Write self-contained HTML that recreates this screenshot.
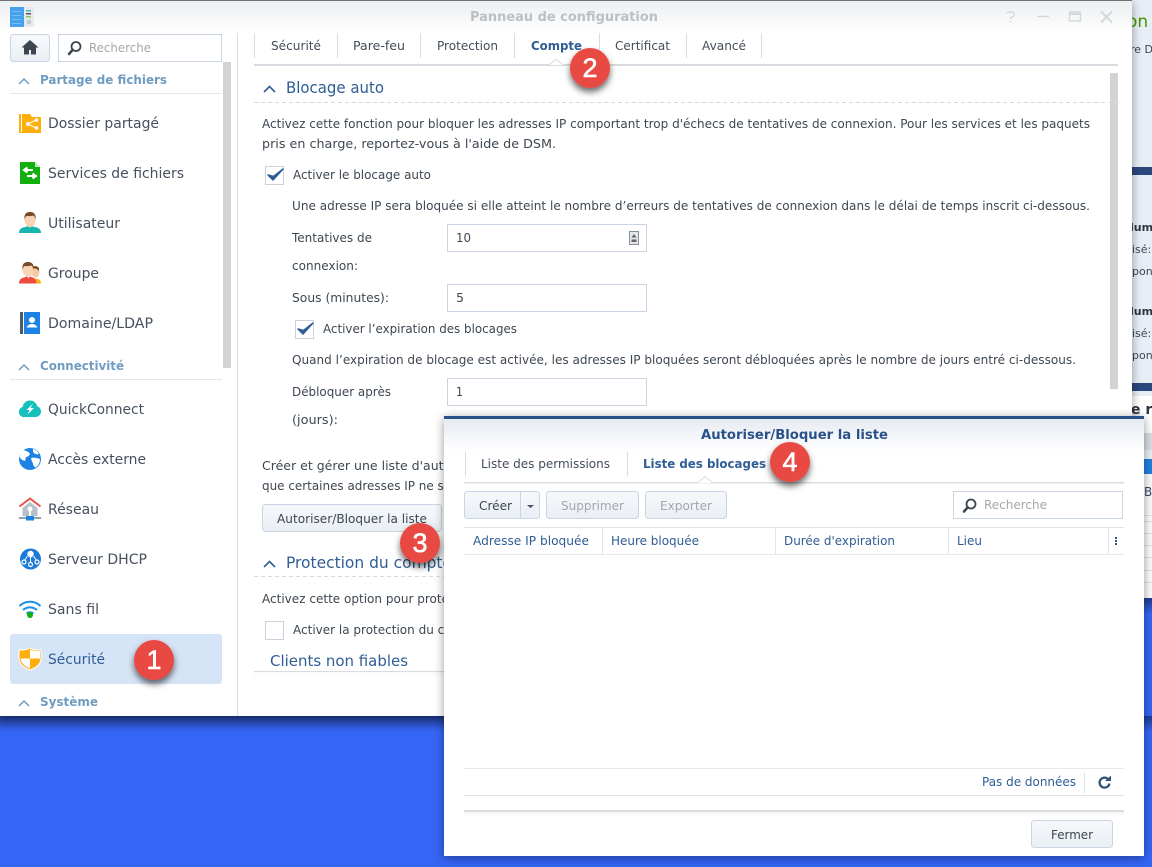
<!DOCTYPE html>
<html lang="fr"><head><meta charset="utf-8"><title>Panneau de configuration</title>
<style>
html,body{margin:0;padding:0;width:1152px;height:867px;overflow:hidden;background:#3565f5}
svg{display:block;position:absolute;left:0;top:0;filter:blur(.3px)}
text{font-family:"DejaVu Sans","Liberation Sans",sans-serif;white-space:pre}
.s{font-size:14px;fill:#46505e}
.h{font-size:12.5px;font-weight:bold;fill:#6f9cc2}
.t{font-size:12px;fill:#434d59}
.b{font-size:12px;fill:#3d4751}
.e{font-size:11px;fill:#3d4751}
.bl{font-size:16px;fill:#2f5d95}
.n{font-size:12px;fill:#2f5d95}
.g{font-size:12px;fill:#a2a8ae}
.r{font-family:"Liberation Sans",sans-serif;font-size:27px;fill:#fff;stroke:#fff;stroke-width:.6px;text-anchor:middle}
</style></head><body>
<svg width="1152" height="867" viewBox="0 0 1152 867" xmlns="http://www.w3.org/2000/svg">
<defs>
<linearGradient id="tb" x1="0" y1="0" x2="0" y2="1"><stop offset="0" stop-color="#eceef0"/><stop offset="1" stop-color="#fff"/></linearGradient>
<linearGradient id="db" x1="0" y1="0" x2="0" y2="1"><stop offset="0" stop-color="#e6ebf2"/><stop offset="1" stop-color="#fff"/></linearGradient>
<linearGradient id="btn" x1="0" y1="0" x2="0" y2="1"><stop offset="0" stop-color="#f6f8fb"/><stop offset="1" stop-color="#eaeff5"/></linearGradient>
<linearGradient id="bg" x1="0" y1="0" x2="0" y2="1"><stop offset="0" stop-color="#1e3a8e"/><stop offset="1" stop-color="#3565f5"/></linearGradient>
<filter id="ws" x="-5%" y="-5%" width="110%" height="110%"><feDropShadow dx="0" dy="2" stdDeviation="5" flood-color="#000" flood-opacity=".4"/></filter>
<filter id="bs" x="-50%" y="-50%" width="200%" height="200%"><feDropShadow dx="0" dy="4" stdDeviation="3.500" flood-color="#000" flood-opacity=".6"/></filter>
<clipPath id="cr"><rect x="1132" y="0" width="20" height="600"/></clipPath>
</defs>

<!-- desktop + window behind -->
<rect width="1152" height="867" fill="#3565f5"/>
<rect x="0" y="716" width="1152" height="16" fill="url(#bg)"/>
<rect x="1120" y="0" width="32" height="598" fill="#e9eef6"/>
<rect x="1120" y="598" width="32" height="16" fill="url(#bg)"/>
<rect x="1120" y="167" width="32" height="8" fill="#2a477d"/>
<rect x="1120" y="383" width="32" height="8" fill="#2a477d"/>
<rect x="1132" y="396" width="20" height="37" fill="#fff"/>
<rect x="1132" y="433" width="20" height="17" fill="#d8dde3"/>
<rect x="1132" y="459" width="20" height="15" fill="#1f80e0"/>
<rect x="1132" y="474" width="20" height="124" fill="#fbfcfd"/>
<g fill="#dfe3e8"><rect x="1132" y="515" width="20" height="1"/><rect x="1132" y="521" width="20" height="1"/><rect x="1132" y="533" width="20" height="1"/><rect x="1132" y="545" width="20" height="1"/><rect x="1132" y="557" width="20" height="1"/><rect x="1132" y="570" width="20" height="1"/><rect x="1132" y="582" width="20" height="1"/></g>
<g clip-path="url(#cr)">
<text x="1127" y="27" style="font-size:17px;fill:#3a9a00">on</text>
<text x="1130" y="53" class="e">re D</text>
<text x="1130" y="231" class="e" font-weight="bold" style="fill:#2d3540">lum</text>
<text x="1132" y="253" class="e">isé:</text>
<text x="1132" y="275" class="e">pon</text>
<text x="1130" y="315" class="e" font-weight="bold" style="fill:#2d3540">lum</text>
<text x="1132" y="337" class="e">isé:</text>
<text x="1132" y="359" class="e">pon</text>
<text x="1131" y="414" font-weight="bold" style="font-size:14px;fill:#2d3540">e re</text>
<text x="1144" y="496" class="b" style="fill:#3d4a66">B,</text>
</g>

<!-- main window -->
<rect x="0" y="0" width="1132" height="716" fill="#fff" filter="url(#ws)"/>
<rect x="0" y="0" width="1132" height="33" fill="url(#tb)"/>
<rect x="0" y="0" width="1132" height="1" fill="#6c7178"/>
<!-- app icon -->
<rect x="10" y="7" width="14" height="20" fill="#45a0ee"/>
<rect x="24" y="7" width="10" height="20" fill="#e6eaee"/>
<g fill="#79bdf4"><rect x="12" y="11" width="9" height="1"/><rect x="12" y="15" width="9" height="1"/><rect x="12" y="19" width="9" height="1"/><rect x="12" y="23" width="9" height="1"/></g>
<rect x="26" y="10" width="5" height="1.500" fill="#4fb3c8"/><rect x="26" y="13" width="5" height="1.500" fill="#555"/><rect x="26" y="16" width="5" height="1.500" fill="#8cc850"/><circle cx="29" cy="22" r="2.500" fill="#c3ccd4"/>
<text x="470" y="21" textLength="188" lengthAdjust="spacingAndGlyphs" font-weight="bold" style="font-size:13px;fill:#bcc0c5">Panneau de configuration</text>
<!-- win controls -->
<g stroke="#d5d8db" stroke-width="1.500" fill="none">
<path d="M1007 13.500q1-1.500 3.500-1.500q3.500 0 3.500 2.500q0 1.500-2 2.500q-1.500.7-1.500 2.500M1010.500 21v1.500"/>
<path d="M1037 16.500h12"/>
<rect x="1069.500" y="12" width="11" height="9" stroke-width="1.500"/><path d="M1070 14h10" stroke-width="2"/>
<path d="M1101 11.500l11 11M1112 11.500l-11 11" stroke-width="2"/>
</g>

<!-- sidebar -->
<rect x="10.500" y="34.500" width="39" height="27" rx="3" fill="url(#btn)" stroke="#c9d5e3"/>
<path d="M30 40l-8.500 7.500h2.500v7h5v-4.500h2v4.500h5v-7h2.500z" fill="#3d4650"/>
<rect x="58.500" y="34.500" width="163" height="27" fill="#fff" stroke="#c9d5e3"/>
<circle cx="76" cy="46.500" r="4.500" fill="none" stroke="#3d4650" stroke-width="1.800"/><path d="M72.500 50l-3.500 4" stroke="#3d4650" stroke-width="2.500" stroke-linecap="round"/>
<text x="89" y="52" textLength="62" lengthAdjust="spacingAndGlyphs" class="g">Recherche</text>
<rect x="223" y="62" width="8" height="306" fill="#d2d3d5"/>
<rect x="237" y="33" width="1" height="683" fill="#dcdfe2"/>

<path d="M19 84l5-5 5 5" fill="none" stroke="#6f9cc2" stroke-width="1.500"/>
<text x="40" y="84" textLength="127" lengthAdjust="spacingAndGlyphs" class="h">Partage de fichiers</text>
<rect x="10" y="93" width="212" height="1" fill="#e6e9ec"/>
<path d="M19 370l5-5 5 5" fill="none" stroke="#6f9cc2" stroke-width="1.500"/>
<text x="40" y="370" textLength="84" lengthAdjust="spacingAndGlyphs" class="h">Connectivité</text>
<rect x="10" y="379" width="212" height="1" fill="#e6e9ec"/>
<path d="M19 706l5-5 5 5" fill="none" stroke="#6f9cc2" stroke-width="1.500"/>
<text x="40" y="706" textLength="58" lengthAdjust="spacingAndGlyphs" class="h">Système</text>
<rect x="10" y="634" width="212" height="50" rx="3" fill="#d6e4f7"/>

<text x="48" y="128" textLength="111" lengthAdjust="spacingAndGlyphs" class="s">Dossier partagé</text>
<text x="48" y="178" textLength="136" lengthAdjust="spacingAndGlyphs" class="s">Services de fichiers</text>
<text x="48" y="228" textLength="72" lengthAdjust="spacingAndGlyphs" class="s">Utilisateur</text>
<text x="48" y="278" textLength="51" lengthAdjust="spacingAndGlyphs" class="s">Groupe</text>
<text x="48" y="328" textLength="105" lengthAdjust="spacingAndGlyphs" class="s">Domaine/LDAP</text>
<text x="48" y="414" textLength="96" lengthAdjust="spacingAndGlyphs" class="s">QuickConnect</text>
<text x="48" y="464" textLength="98" lengthAdjust="spacingAndGlyphs" class="s">Accès externe</text>
<text x="48" y="514" textLength="51" lengthAdjust="spacingAndGlyphs" class="s">Réseau</text>
<text x="48" y="564" textLength="99" lengthAdjust="spacingAndGlyphs" class="s">Serveur DHCP</text>
<text x="48" y="614" textLength="51" lengthAdjust="spacingAndGlyphs" class="s">Sans fil</text>
<text x="48" y="664" textLength="57" lengthAdjust="spacingAndGlyphs" class="s" style="fill:#2f5d95">Sécurité</text>

<!-- icon: dossier -->
<path d="M19 114h4l1 0h6l2 3h9v16H19z" fill="#fdae0a"/><rect x="21" y="114" width="1" height="18" fill="#fff"/>
<g fill="#fff" stroke="#fff"><path d="M28 124l8-4M28 124l8 4" stroke-width="1" fill="none"/><circle cx="28" cy="124" r="1.500"/><circle cx="36.500" cy="120" r="1.300"/><circle cx="36.500" cy="128" r="1.300"/></g>
<!-- icon: services -->
<path d="M20 162h15l5 5v17H20z" fill="#11b00f"/><path d="M35 162l5 5h-5z" fill="#bfe8bf"/>
<path d="M33 170h-8M27.500 167.500l-3.500 2.500 3.500 2.500M27 176h8M32.500 173.500l3.500 2.500-3.500 2.500" stroke="#fff" stroke-width="2" fill="none"/>
<!-- icon: utilisateur -->
<path d="M19 233q0-5 6-6l4-1 1 2 1-2 4 1q6 1 6 6z" fill="#19b5b0"/>
<ellipse cx="30" cy="220" rx="5.500" ry="7" fill="#f8d4b4"/><path d="M24.500 220q-1-8 5.500-8t5.500 8q-1-4-2-4.500-3 1-7 .5-1.500 1-2 4z" fill="#7a4a25"/>
<!-- icon: groupe -->
<path d="M32 283.500q0-4 3-5l3 .5q3 1 3 4.500z" fill="#fbae17"/><ellipse cx="35.500" cy="272" rx="4" ry="5.500" fill="#f5c9a4"/><path d="M32 268q3-4 7 0v3l-2-2z" fill="#7a4a25"/>
<path d="M19 283.500q0-5 5-6l3-1 1.500 1.500 1.500-1.500 3 1q3 1 3.500 6z" fill="#ee4a44"/>
<ellipse cx="28" cy="269.500" rx="5.500" ry="7" fill="#f8d4b4"/><path d="M22.500 270q-1-8 5.500-8t5.500 8q-1-4-2-4.500-3 1-7 .5-1.500 1-2 4z" fill="#7a4a25"/>
<!-- icon: domaine -->
<rect x="20" y="312" width="3" height="22" fill="#4d5a68"/><rect x="24" y="312" width="16" height="22" fill="#1c82e4"/>
<circle cx="32" cy="320" r="3" fill="#fff"/><path d="M26.500 327.500q1-3 5.500-3.500 4.500.5 5.500 3.500z" fill="#fff"/>
<!-- icon: quickconnect -->
<g fill="#17c0bc"><circle cx="30" cy="408" r="7.500"/><circle cx="24" cy="412" r="5.200"/><circle cx="35.500" cy="411.500" r="5.500"/><rect x="24" y="411" width="12" height="6"/></g><path d="M33 403.500l-6.500 6.500h3l-2 4.500 6.500-6.500h-3.500z" fill="#fff"/>
<!-- icon: accès -->
<circle cx="30" cy="459" r="11" fill="#1c82e4"/><path d="M23 450q5 1 7 3.500-1 3.500-4 3.500l-1 4q-4-1-5.500-4 .5-4.500 3.500-7zM31 458q5-1 9 1 0 5-4 8.500-2.500-.5-3-4-1.500-2.500-2-5.500zM33 449q4 1 6 5-3.500 1-6-2z" fill="#fff"/>
<!-- icon: réseau -->
<path d="M19.500 506.500L30 498.500l10.500 8" fill="none" stroke="#f0504a" stroke-width="2"/>
<path d="M22.500 508l7.500-6 7.500 6v8h-15z" fill="#b7bfc7"/><circle cx="30" cy="509" r="2.500" fill="#fff"/><rect x="29" y="510" width="2" height="6" fill="#fff"/>
<rect x="19" y="517" width="22" height="2" fill="#8fa0ae"/><rect x="26" y="516" width="8" height="4.500" fill="#1c82e4"/>
<!-- icon: dhcp -->
<circle cx="30.500" cy="559" r="10.500" fill="#1c7ad8"/><circle cx="30.500" cy="554" r="3.200" fill="#fff"/>
<path d="M30.500 556v6M27.500 556l-3 4.500M33.500 556l3 4.500" stroke="#fff" stroke-width="1" fill="none"/>
<g fill="#1c7ad8" stroke="#fff" stroke-width="1.200"><circle cx="24" cy="562" r="2"/><circle cx="30.500" cy="564.500" r="2"/><circle cx="37" cy="562" r="2"/></g>
<!-- icon: wifi -->
<g fill="none" stroke="#1c90e8" stroke-width="2"><path d="M19.500 606A15 15 0 0 1 40.500 606"/><path d="M23 610A10.500 10.500 0 0 1 37 610"/><path d="M26.500 613.500A5.500 5.500 0 0 1 33.500 613.500"/></g><circle cx="30" cy="615" r="3" fill="#11b00f"/>
<!-- icon: sécurité -->
<path d="M30 648q5 2.500 11 2v8q0 8-11 12-11-4-11-12v-8q6 .5 11-2z" fill="#fdae0a" stroke="#fff" stroke-width="1"/><path d="M30 649.500v9h10v-7.500q-5 .5-10-1.500zM30 658.500h-9.500q.5 6 9.500 10z" fill="#fff"/>

<!-- main tabs -->
<g fill="#d5dde6"><rect x="254" y="33" width="1" height="25"/><rect x="337" y="33" width="1" height="25"/><rect x="420" y="33" width="1" height="25"/><rect x="514" y="33" width="1" height="25"/><rect x="599" y="33" width="1" height="25"/><rect x="686" y="33" width="1" height="25"/><rect x="761" y="33" width="1" height="25"/></g>
<text x="271" y="50" textLength="50" lengthAdjust="spacingAndGlyphs" class="t">Sécurité</text>
<text x="353" y="50" textLength="52" lengthAdjust="spacingAndGlyphs" class="t">Pare-feu</text>
<text x="437" y="50" textLength="61" lengthAdjust="spacingAndGlyphs" class="t">Protection</text>
<text x="531" y="50" textLength="51" lengthAdjust="spacingAndGlyphs" class="t" font-weight="bold" style="fill:#2f5d95">Compte</text>
<text x="615" y="50" textLength="55" lengthAdjust="spacingAndGlyphs" class="t">Certificat</text>
<text x="702" y="50" textLength="44" lengthAdjust="spacingAndGlyphs" class="t">Avancé</text>
<rect x="254" y="64" width="864" height="2" fill="#d8dce0"/>
<path d="M549 65l7-6 7 6z" fill="#fff"/><path d="M549 65l7-6 7 6" fill="none" stroke="#d8dce0"/>

<rect x="1110" y="73" width="8" height="316" fill="#d2d3d5"/>
<path d="M264 92l5.500-5.500 5.500 5.500" fill="none" stroke="#2f5d95" stroke-width="1.600"/>
<text x="286" y="93" textLength="98" lengthAdjust="spacingAndGlyphs" class="bl">Blocage auto</text>
<path d="M254 102.500h865" stroke="#d5dbe2" stroke-dasharray="4 3" fill="none"/>

<text x="262" y="128" textLength="828" lengthAdjust="spacingAndGlyphs" class="b">Activez cette fonction pour bloquer les adresses IP comportant trop d'échecs de tentatives de connexion. Pour les services et les paquets</text>
<text x="262" y="148" textLength="294" lengthAdjust="spacingAndGlyphs" class="b">pris en charge, reportez-vous à l'aide de DSM.</text>
<rect x="265.500" y="166.500" width="18" height="18" fill="#fff" stroke="#c9d3de"/>
<path d="M268 175l5 5 10-11-9.500 7.500z" fill="#2f5d95" stroke="#2f5d95" stroke-width="1.500" stroke-linejoin="round"/>
<text x="293" y="179" textLength="138" lengthAdjust="spacingAndGlyphs" class="b">Activer le blocage auto</text>
<text x="292" y="210" textLength="798" lengthAdjust="spacingAndGlyphs" class="b">Une adresse IP sera bloquée si elle atteint le nombre d’erreurs de tentatives de connexion dans le délai de temps inscrit ci-dessous.</text>
<text x="292" y="242" textLength="80" lengthAdjust="spacingAndGlyphs" class="b">Tentatives de</text>
<text x="292" y="270" textLength="66" lengthAdjust="spacingAndGlyphs" class="b">connexion:</text>
<rect x="447.500" y="224.500" width="199" height="27" fill="#fff" stroke="#c9d5e3"/>
<text x="456" y="242" textLength="15" lengthAdjust="spacingAndGlyphs" class="b">10</text>
<rect x="629.500" y="231.500" width="9" height="13" fill="#e4e6e8" stroke="#8a8f95"/><path d="M631.500 237.500l2.500-3.500 2.500 3.500zM631.500 239.500h5v2.500h-5z" fill="#5f656c"/>
<text x="292" y="302" textLength="97" lengthAdjust="spacingAndGlyphs" class="b">Sous (minutes):</text>
<rect x="447.500" y="284.500" width="199" height="27" fill="#fff" stroke="#c9d5e3"/>
<text x="456" y="302" textLength="8" lengthAdjust="spacingAndGlyphs" class="b">5</text>
<rect x="295.500" y="320.500" width="18" height="18" fill="#fff" stroke="#c9d3de"/>
<path d="M298 329l5 5 10-11-9.500 7.500z" fill="#2f5d95" stroke="#2f5d95" stroke-width="1.500" stroke-linejoin="round"/>
<text x="323" y="333" textLength="194" lengthAdjust="spacingAndGlyphs" class="b">Activer l’expiration des blocages</text>
<text x="292" y="364" textLength="784" lengthAdjust="spacingAndGlyphs" class="b">Quand l’expiration de blocage est activée, les adresses IP bloquées seront débloquées après le nombre de jours entré ci-dessous.</text>
<text x="292" y="396" textLength="99" lengthAdjust="spacingAndGlyphs" class="b">Débloquer après</text>
<rect x="447.500" y="378.500" width="199" height="27" fill="#fff" stroke="#c9d5e3"/>
<text x="456" y="396" textLength="7" lengthAdjust="spacingAndGlyphs" class="b">1</text>
<text x="292" y="424" textLength="46" lengthAdjust="spacingAndGlyphs" class="b">(jours):</text>
<text x="262" y="470" textLength="236" lengthAdjust="spacingAndGlyphs" class="b">Créer et gérer une liste d'autorisation</text>
<text x="262" y="490" textLength="212" lengthAdjust="spacingAndGlyphs" class="b">que certaines adresses IP ne soient</text>
<rect x="262.500" y="504.500" width="179" height="27" rx="3" fill="url(#btn)" stroke="#c9d5e3"/>
<text x="277" y="523" textLength="150" lengthAdjust="spacingAndGlyphs" class="b">Autoriser/Bloquer la liste</text>
<path d="M264 567l5.500-5.500 5.500 5.500" fill="none" stroke="#2f5d95" stroke-width="1.600"/>
<text x="286" y="568" textLength="166" lengthAdjust="spacingAndGlyphs" class="bl">Protection du compte</text>
<path d="M254 576.500h200" stroke="#d5dbe2" stroke-dasharray="4 3" fill="none"/>
<text x="262" y="603" textLength="207" lengthAdjust="spacingAndGlyphs" class="b">Activez cette option pour protéger</text>
<rect x="265.500" y="621.500" width="18" height="18" fill="#fff" stroke="#c9d3de"/>
<text x="293" y="634" textLength="190" lengthAdjust="spacingAndGlyphs" class="b">Activer la protection du compte</text>
<text x="270" y="666" textLength="138" lengthAdjust="spacingAndGlyphs" style="font-size:15px;fill:#2f5d95">Clients non fiables</text>
<rect x="254" y="671" width="200" height="1" fill="#d8dce0"/>
<rect x="254" y="672" width="200" height="4" fill="#fafbfb"/>

<!-- dialog -->
<rect x="444" y="416" width="700" height="440" fill="#fff" filter="url(#ws)"/>
<rect x="444" y="419" width="700" height="32" fill="url(#db)"/>
<rect x="444" y="416" width="700" height="3" fill="#2a5288"/>
<text x="701" y="439" textLength="187" lengthAdjust="spacingAndGlyphs" font-weight="bold" style="font-size:13px;fill:#2a5288">Autoriser/Bloquer la liste</text>
<g fill="#d5dde6"><rect x="465" y="452" width="1" height="24"/><rect x="627" y="452" width="1" height="24"/></g>
<text x="481" y="468" textLength="129" lengthAdjust="spacingAndGlyphs" class="t">Liste des permissions</text>
<text x="643" y="468" textLength="123" lengthAdjust="spacingAndGlyphs" class="t" font-weight="bold" style="fill:#2f5d95">Liste des blocages</text>
<rect x="464" y="482" width="660" height="1.500" fill="#d8dce0"/>
<path d="M698 483l7-6 7 6z" fill="#fff"/><path d="M698 482.500l7-6 7 6" fill="none" stroke="#d8dce0"/>

<rect x="464.500" y="491.500" width="75" height="27" rx="3" fill="url(#btn)" stroke="#c9d5e3"/><rect x="520" y="492" width="1" height="26" fill="#c9d5e3"/>
<text x="479" y="510" textLength="33" lengthAdjust="spacingAndGlyphs" class="b">Créer</text>
<path d="M527 505h7l-3.500 3z" fill="#48525e"/>
<rect x="546.500" y="491.500" width="92" height="27" rx="3" fill="url(#btn)" stroke="#c9d5e3"/>
<text x="561" y="510" textLength="63" lengthAdjust="spacingAndGlyphs" class="g">Supprimer</text>
<rect x="645.500" y="491.500" width="81" height="27" rx="3" fill="url(#btn)" stroke="#c9d5e3"/>
<text x="660" y="510" textLength="52" lengthAdjust="spacingAndGlyphs" class="g">Exporter</text>
<rect x="953.500" y="491.500" width="169" height="27" fill="#fff" stroke="#c9d5e3"/>
<circle cx="971" cy="504" r="4.500" fill="none" stroke="#3d4650" stroke-width="1.800"/><path d="M967.500 507.500l-3.500 4" stroke="#3d4650" stroke-width="2.500" stroke-linecap="round"/>
<text x="984" y="509" textLength="63" lengthAdjust="spacingAndGlyphs" class="g">Recherche</text>

<rect x="464" y="527" width="660" height="1" fill="#dde4ec"/><rect x="464" y="554" width="660" height="1" fill="#e4e9ef"/>
<g fill="#dde4ec"><rect x="602" y="527" width="1" height="27"/><rect x="775" y="527" width="1" height="27"/><rect x="948" y="527" width="1" height="27"/><rect x="1108" y="527" width="1" height="27"/></g>
<text x="473" y="545" textLength="116" lengthAdjust="spacingAndGlyphs" class="n">Adresse IP bloquée</text>
<text x="611" y="545" textLength="88" lengthAdjust="spacingAndGlyphs" class="n">Heure bloquée</text>
<text x="784" y="545" textLength="111" lengthAdjust="spacingAndGlyphs" class="n">Durée d'expiration</text>
<text x="957" y="545" textLength="25" lengthAdjust="spacingAndGlyphs" class="n">Lieu</text>
<g fill="#2a5288"><rect x="1115" y="537" width="2" height="2"/><rect x="1115" y="540" width="2" height="2"/><rect x="1115" y="543" width="2" height="2"/></g>

<rect x="464" y="768" width="660" height="1" fill="#e4e9ef"/><rect x="464" y="795" width="660" height="1" fill="#dde4ec"/>
<rect x="1084" y="773" width="1" height="20" fill="#dde4ec"/>
<text x="982" y="786" textLength="94" lengthAdjust="spacingAndGlyphs" class="n">Pas de données</text>
<path d="M1108.500 779.500a5 5 0 1 0 1 4" fill="none" stroke="#2f5477" stroke-width="2.300"/><path d="M1105 781h6v-5.500z" fill="#2f5477"/>
<rect x="464" y="810" width="660" height="2" fill="#dadde0"/><rect x="464" y="812" width="660" height="3" fill="#f7f8f9"/>
<rect x="1031.500" y="820.500" width="81" height="27" rx="3" fill="url(#btn)" stroke="#c9d5e3"/>
<text x="1051" y="839" textLength="42" lengthAdjust="spacingAndGlyphs" class="b">Fermer</text>

<!-- badges -->
<g filter="url(#bs)"><circle cx="154" cy="660" r="20" fill="#e84a43"/></g><text x="154" y="669" class="r">1</text>
<g filter="url(#bs)"><circle cx="590" cy="68" r="20" fill="#e84a43"/></g><text x="590" y="77" class="r">2</text>
<g filter="url(#bs)"><circle cx="420" cy="543" r="20" fill="#e84a43"/></g><text x="420" y="552" class="r">3</text>
<g filter="url(#bs)"><circle cx="790" cy="462" r="20" fill="#e84a43"/></g><text x="790" y="471" class="r">4</text>
</svg>
</body></html>
